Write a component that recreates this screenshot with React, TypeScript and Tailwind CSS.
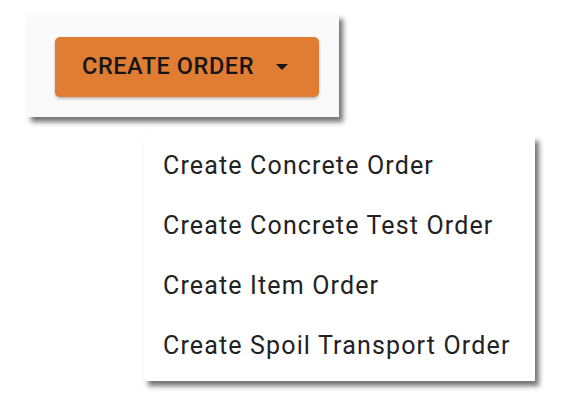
export default function App() {
  const items = [
    'Create Concrete Order',
    'Create Concrete Test Order',
    'Create Item Order',
    'Create Spoil Transport Order',
  ];

  return (
    <div
      className="w-[570px] h-[408px] bg-white flex flex-col overflow-hidden"
      style={{ fontFamily: 'Roboto, "Liberation Sans", sans-serif' }}
    >
      {/* button panel */}
      <div className="ml-[27px] mt-[14px] w-[312px] h-[103px] bg-[#fafafa] shadow-[4px_5px_5px_rgba(0,0,0,0.55)] pl-[28px] pt-[23px]">
        <button className="h-[60px] w-[264px] rounded-[5px] bg-[#e17c33] shadow-[0_2px_3px_rgba(0,0,0,0.25)] flex items-center pl-[27px] text-[#161616]">
          <span className="text-[23.5px] font-medium tracking-[0.55px] leading-none">CREATE ORDER</span>
          <svg className="ml-[22px]" width="12" height="6" viewBox="0 0 12 6">
            <path d="M0 0 L12 0 L6 6 Z" fill="#161616" />
          </svg>
        </button>
      </div>

      {/* menu */}
      <div className="ml-[144px] mt-[19px] w-[391px] h-[245px] bg-white shadow-[4px_5px_5px_rgba(0,0,0,0.55)] flex flex-col pb-[6px]">
        {items.map((label) => (
          <div key={label} className="h-[60px] flex items-center pl-[19px] text-[25px] tracking-[1.15px] text-[#222222] leading-none">
            {label}
          </div>
        ))}
      </div>
    </div>
  );
}
